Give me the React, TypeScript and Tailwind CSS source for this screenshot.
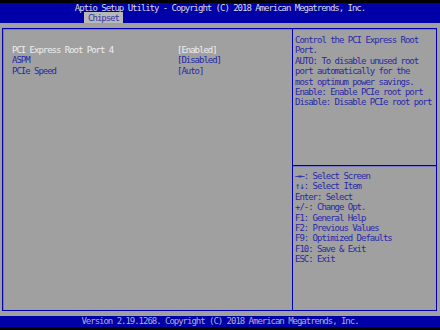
import React from "react";

const mono = { fontFamily: '"DejaVu Sans Mono", "Liberation Mono", monospace' };

const items = [
  { name: "PCI Express Root Port 4", value: "[Enabled]", active: true },
  { name: "ASPM", value: "[Disabled]", active: false },
  { name: "PCIe Speed", value: "[Auto]", active: false },
];

const help = [
  "Control the PCI Express Root",
  "Port.",
  "AUTO: To disable unused root",
  "port automatically for the",
  "most optimum power savings.",
  "Enable: Enable PCIe root port",
  "Disable: Disable PCIe root port",
];

const keys = [
  "\u2192\u2190: Select Screen",
  "\u2191\u2193: Select Item",
  "Enter: Select",
  "+/-: Change Opt.",
  "F1: General Help",
  "F2: Previous Values",
  "F9: Optimized Defaults",
  "F10: Save & Exit",
  "ESC: Exit",
];

export default function App() {
  return (
    <div
      className="w-[440px] h-[330px] bg-black flex flex-col text-[9px] tracking-[-1.02px] leading-[10.4px] overflow-hidden"
      style={mono}
    >
      <div className="h-[3px]" />
      {/* header */}
      <div className="h-[20px] bg-[#0000a8] flex flex-col">
        <div className="h-[9px] leading-[10px] text-center text-[#d8d8e0] whitespace-pre">
          Aptio Setup Utility - Copyright (C) 2018 American Megatrends, Inc.
        </div>
        <div className="h-[11px] pl-[84px] flex">
          <div className="w-[39px] h-[11px] bg-[#b8b8b8] text-[#3434a4] leading-[12px] text-center">
            Chipset
          </div>
        </div>
      </div>

      {/* body */}
      <div className="flex-1 bg-[#a0a0a0] pt-[5px] pb-[5px] pl-[2px] pr-[3px] flex">
        <div className="flex-1 flex border border-[#0000b0] shadow-[inset_1px_1px_0_#7878c4]">
          {/* left */}
          <div className="w-[289px] pl-[9px] pt-[16px]">
            {items.map((it) => (
              <div
                key={it.name}
                className={`flex whitespace-pre ${it.active ? "text-[#eeeeee]" : "text-[#2828aa]"}`}
              >
                <span className="w-[165px]">{it.name}</span>
                <span>{it.value}</span>
              </div>
            ))}
          </div>
          {/* right */}
          <div className="flex-1 border-l border-[#0000b0] flex flex-col">
            <div className="h-[136px] pl-[2px] pt-[6px] text-[#2828aa] whitespace-pre">
              {help.map((l) => (
                <div key={l}>{l}</div>
              ))}
            </div>
            <div className="h-[1px] bg-[#0000b0] shadow-[0_1px_0_#7878c4]" />
            <div className="pl-[2px] pt-[5px] text-[#2828aa] whitespace-pre">
              {keys.map((l) => (
                <div key={l}>{l}</div>
              ))}
            </div>
          </div>
        </div>
      </div>

      {/* footer */}
      <div className="h-[11px] bg-[#0000a8] text-[#b0b0cc] text-center leading-[11px] whitespace-pre">
        Version 2.19.1268. Copyright (C) 2018 American Megatrends, Inc.
      </div>
      <div className="h-[3px]" />
    </div>
  );
}
